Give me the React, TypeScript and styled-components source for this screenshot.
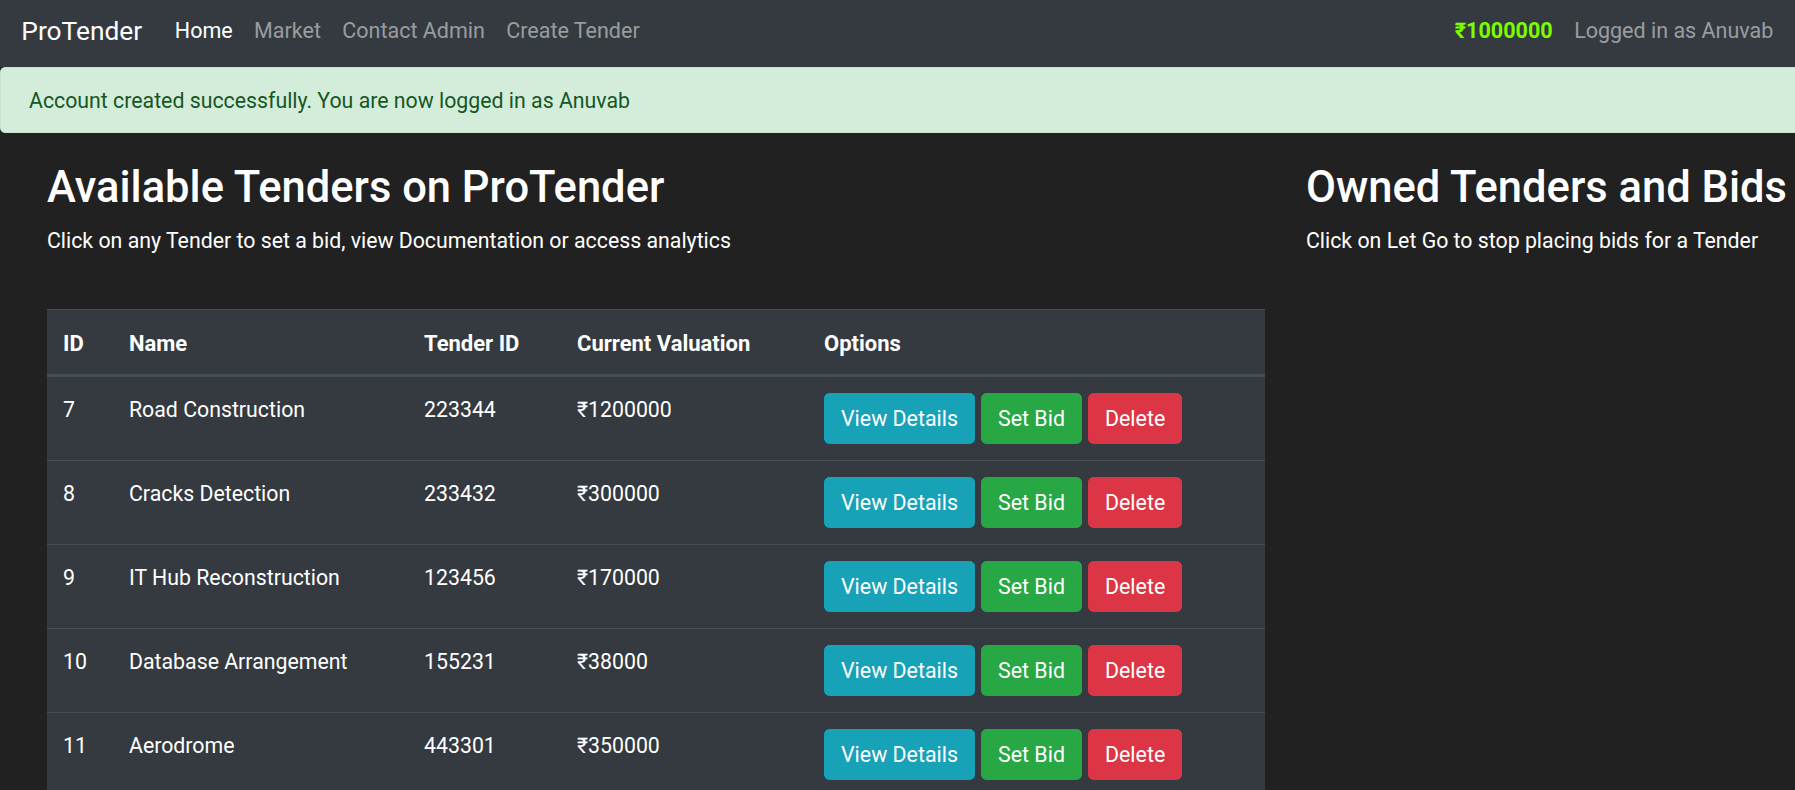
import React from "react";
import styled, { createGlobalStyle } from "styled-components";

const GlobalStyle = createGlobalStyle`
  html, body {
    margin: 0;
    padding: 0;
    background: #212121;
    overflow-x: hidden;
  }
  body {
    font-family: Roboto, "Liberation Sans", Arial, sans-serif;
    font-size: 21.3px;
    line-height: 32px;
    color: #ffffff;
  }
  * { box-sizing: border-box; }
`;

const Navbar = styled.nav`
  display: flex;
  align-items: center;
  height: 67px;
  padding: 0 11px 5px 21.3px;
  background: #343a40;
`;

const Brand = styled.a`
  font-size: 26.3px;
  line-height: 40px;
  color: #ffffff;
  margin-right: 22px;
  white-space: nowrap;
`;

const NavList = styled.ul`
  display: flex;
  list-style: none;
  margin: 0;
  padding: 0;
  flex: 1;
`;

const NavLink = styled.a<{ $active?: boolean }>`
  display: block;
  padding: 0 10.7px;
  font-size: 21.5px;
  line-height: 32px;
  color: ${p => (p.$active ? "#ffffff" : "rgba(255,255,255,0.5)")};
  white-space: nowrap;
`;

const Balance = styled.span`
  font-weight: 700;
  font-size: 21.6px;
  color: #7cfc00;
  padding: 0 10.7px;
  white-space: nowrap;
`;

const Alert = styled.div`
  padding: 17px 28px 15px;
  border: 1px solid #c3e6cb;
  border-right: none;
  border-radius: 5.3px 0 0 5.3px;
  background: #d4edda;
  color: #155724;
  font-size: 21.3px;
  line-height: 32px;
`;

const Main = styled.main`
  display: grid;
  grid-template-columns: 1218px 1fr;
  column-gap: 41px;
  padding: 29px 0 0 47px;
`;

const Column = styled.section`
  min-width: 0;
  white-space: nowrap;
`;

const Heading = styled.h1`
  margin: 0 0 10.7px;
  font-size: 43.5px;
  font-weight: 500;
  line-height: 52.6px;
`;

const Lead = styled.p`
  margin: 0;
  font-size: 21.3px;
  line-height: 32px;
`;

const Table = styled.table`
  width: 100%;
  margin-top: 52px;
  border-collapse: collapse;
  background: #343a40;
  color: #ffffff;
`;

const Th = styled.th<{ $w?: number }>`
  width: ${p => (p.$w ? `${p.$w}px` : "auto")};
  padding: 18px 16px 14px;
  text-align: left;
  vertical-align: bottom;
  font-size: 22px;
  font-weight: 700;
  line-height: 32px;
  border-top: 1px solid #454d55;
  border-bottom: 3px solid #454d55;
`;

const Td = styled.td`
  padding: 16px;
  vertical-align: top;
  font-size: 21.3px;
  line-height: 32px;
  border-top: 1px solid #454d55;
`;

const CellText = styled.span`
  display: inline-block;
  padding-top: 1px;
`;

const Actions = styled.div`
  display: flex;
  gap: 6px;
`;

const Button = styled.button<{ $bg: string }>`
  height: 51px;
  padding: 0 16px;
  border: 1px solid ${p => p.$bg};
  border-radius: 5.3px;
  background: ${p => p.$bg};
  color: #ffffff;
  font-family: inherit;
  font-size: 21.4px;
  line-height: 32px;
  cursor: pointer;
`;

const tenders = [
  { id: 7, name: "Road Construction", tenderId: "223344", value: "₹1200000" },
  { id: 8, name: "Cracks Detection", tenderId: "233432", value: "₹300000" },
  { id: 9, name: "IT Hub Reconstruction", tenderId: "123456", value: "₹170000" },
  { id: 10, name: "Database Arrangement", tenderId: "155231", value: "₹38000" },
  { id: 11, name: "Aerodrome", tenderId: "443301", value: "₹350000" },
];

export default function App() {
  return (
    <>
      <GlobalStyle />
      <Navbar>
        <Brand>ProTender</Brand>
        <NavList>
          <li><NavLink $active>Home</NavLink></li>
          <li><NavLink>Market</NavLink></li>
          <li><NavLink>Contact Admin</NavLink></li>
          <li><NavLink>Create Tender</NavLink></li>
        </NavList>
        <Balance>₹1000000</Balance>
        <NavLink>Logged in as Anuvab</NavLink>
      </Navbar>
      <Alert>Account created successfully. You are now logged in as Anuvab</Alert>
      <Main>
        <Column>
          <Heading>Available Tenders on ProTender</Heading>
          <Lead>Click on any Tender to set a bid, view Documentation or access analytics</Lead>
          <Table>
            <thead>
              <tr>
                <Th $w={66}>ID</Th>
                <Th $w={295}>Name</Th>
                <Th $w={153}>Tender ID</Th>
                <Th $w={247}>Current Valuation</Th>
                <Th>Options</Th>
              </tr>
            </thead>
            <tbody>
              {tenders.map(t => (
                <tr key={t.id}>
                  <Td><CellText>{t.id}</CellText></Td>
                  <Td><CellText>{t.name}</CellText></Td>
                  <Td><CellText>{t.tenderId}</CellText></Td>
                  <Td><CellText>{t.value}</CellText></Td>
                  <Td>
                    <Actions>
                      <Button $bg="#17a2b8">View Details</Button>
                      <Button $bg="#28a745">Set Bid</Button>
                      <Button $bg="#dc3545">Delete</Button>
                    </Actions>
                  </Td>
                </tr>
              ))}
            </tbody>
          </Table>
        </Column>
        <Column>
          <Heading>Owned Tenders and Bids</Heading>
          <Lead>Click on Let Go to stop placing bids for a Tender</Lead>
        </Column>
      </Main>
    </>
  );
}
